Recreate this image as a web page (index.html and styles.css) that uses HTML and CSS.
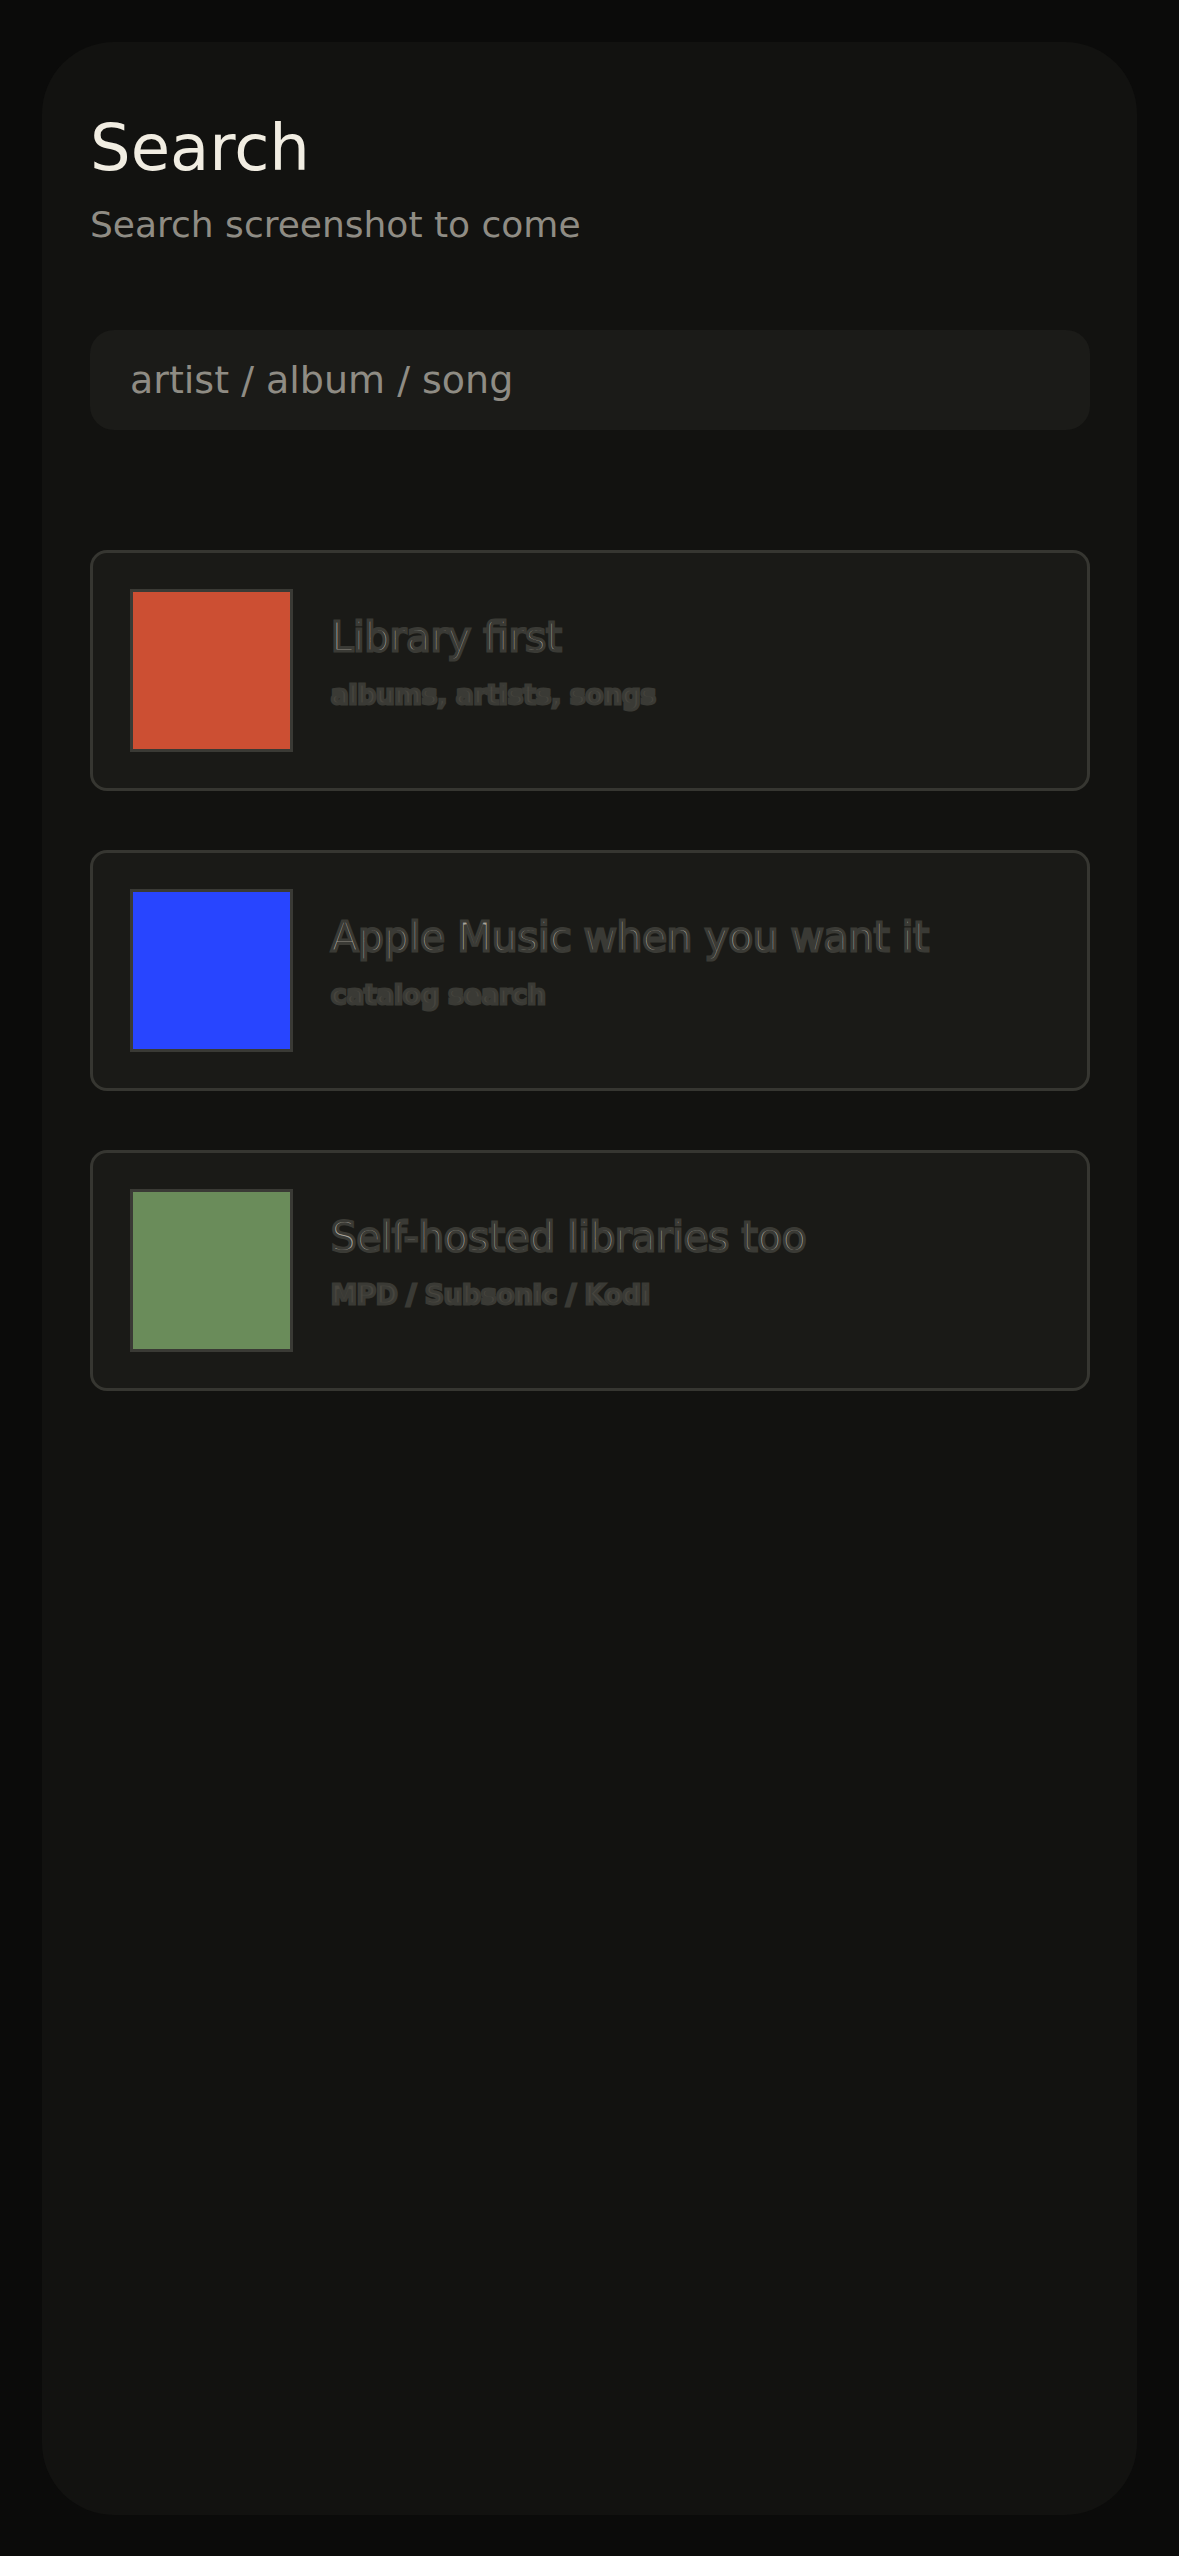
FILE: index.html
```html
<!DOCTYPE html>
<html lang="en">
<head>
<meta charset="utf-8">
<title>Search</title>
<link rel="stylesheet" href="styles.css">
</head>
<body>
<main class="panel">
  <h1 class="title">Search</h1>
  <p class="subtitle">Search screenshot to come</p>
  <div class="searchbox"><span class="placeholder">artist / album / song</span></div>
  <ul class="cards">
    <li class="card">
      <div class="thumb thumb-red"></div>
      <div class="card-text">
        <div class="card-title">Library first</div>
        <div class="card-sub">albums, artists, songs</div>
      </div>
    </li>
    <li class="card">
      <div class="thumb thumb-blue"></div>
      <div class="card-text">
        <div class="card-title">Apple Music when you want it</div>
        <div class="card-sub">catalog search</div>
      </div>
    </li>
    <li class="card">
      <div class="thumb thumb-green"></div>
      <div class="card-text">
        <div class="card-title">Self-hosted libraries too</div>
        <div class="card-sub">MPD / Subsonic / Kodi</div>
      </div>
    </li>
  </ul>
</main>
</body>
</html>
```

FILE: styles.css
```css
* { box-sizing: border-box; }
html, body { margin: 0; padding: 0; }
body {
  background: #0b0b0a;
  font-family: "DejaVu Sans", sans-serif;
  width: 1179px;
  height: 2556px;
  padding: 42px 42px 41px 42px;
}
.panel {
  background: #121210;
  border-radius: 72px;
  height: 100%;
  padding: 68px 47px 0 48px;
}
.title {
  margin: 0;
  font-size: 64px;
  font-weight: normal;
  line-height: 1.2;
  color: #f1ede2;
}
.subtitle {
  margin: 16px 0 0 0;
  font-size: 36px;
  line-height: 1.2;
  color: #8f8c84;
}
.searchbox {
  margin-top: 84px;
  height: 100px;
  background: #1b1b18;
  border-radius: 24px;
  display: flex;
  align-items: center;
  padding: 0 40px;
}
.placeholder {
  font-size: 38px;
  color: #8f8c84;
}
.cards {
  list-style: none;
  margin: 120px 0 0 0;
  padding: 0;
  display: flex;
  flex-direction: column;
  gap: 59px;
}
.card {
  display: flex;
  align-items: flex-start;
  gap: 38px;
  background: #1a1a17;
  border: 3px solid #363631;
  border-radius: 17px;
  padding: 36px 37px;
}
.thumb {
  width: 163px;
  height: 163px;
  border: 3px solid #3a3a35;
  flex: none;
}
.thumb-red { background: #cc4f33; }
.thumb-blue { background: #2845ff; }
.thumb-green { background: #6a8c5a; }
.card-text {
  padding-top: 24px;
}
.card-title {
  font-size: 40px;
  line-height: 48px;
  color: #a8a49a;
  -webkit-text-stroke: 3px #3a3a35;
}
.card-sub {
  margin-top: 19px;
  font-size: 26px;
  font-weight: bold;
  line-height: 31px;
  color: #48463f;
  -webkit-text-stroke: 3px #3a3a35;
}
```
